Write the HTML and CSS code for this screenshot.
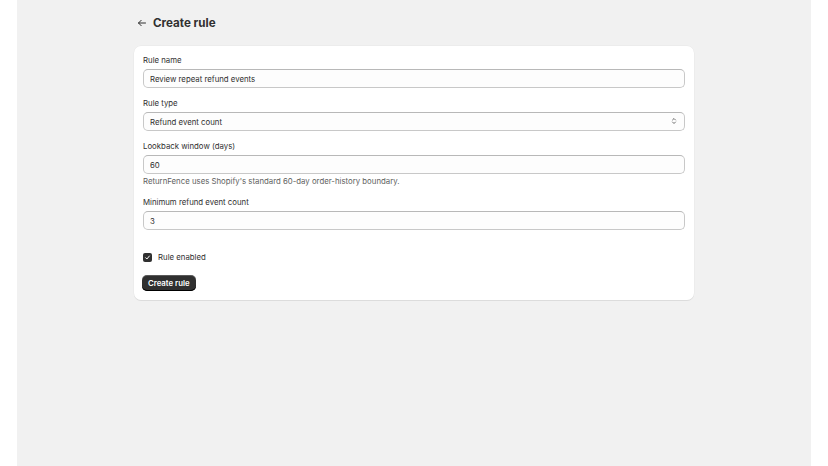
FILE: index.html
```html
<!DOCTYPE html>
<html lang="en">
<head>
    <meta charset="UTF-8">
    <meta name="viewport" content="width=device-width, initial-scale=1.0">
    <title>Create rule - ReturnFence</title>
    <link rel="stylesheet" href="styles.css">
</head>
<body>
    <div class="frame">
        <div class="page">
            <div class="page-header">
                <a href="#" class="back-link" aria-label="Back">
                    <svg width="10" height="10" viewBox="0 0 10 10" fill="none" stroke="#303030" stroke-width="1" stroke-linecap="round" stroke-linejoin="round">
                        <path d="M8.5 5H1.5M4.2 2.3L1.5 5l2.7 2.7"/>
                    </svg>
                </a>
                <h1>Create rule</h1>
            </div>

            <form class="card">
                <div class="field">
                    <label for="ruleName">Rule name</label>
                    <input type="text" id="ruleName" value="Review repeat refund events">
                </div>

                <div class="field">
                    <label for="ruleType">Rule type</label>
                    <div class="select-wrap">
                        <select id="ruleType">
                            <option>Refund event count</option>
                        </select>
                        <svg class="select-icon" width="8" height="8" viewBox="0 0 8 8" fill="none" stroke="#4a4a4a" stroke-width="0.8" stroke-linecap="round" stroke-linejoin="round">
                            <path d="M2.5 3L4 1.5 5.5 3M2.5 5L4 6.5 5.5 5"/>
                        </svg>
                    </div>
                </div>

                <div class="field">
                    <label for="lookback">Lookback window (days)</label>
                    <input type="text" id="lookback" value="60">
                    <p class="help-text">ReturnFence uses Shopify's standard 60-day order-history boundary.</p>
                </div>

                <div class="field">
                    <label for="minCount">Minimum refund event count</label>
                    <input type="text" id="minCount" value="3">
                </div>

                <label class="checkbox-row">
                    <span class="checkbox">
                        <svg width="7" height="7" viewBox="0 0 7 7" fill="none" stroke="#fff" stroke-width="1" stroke-linecap="round" stroke-linejoin="round">
                            <path d="M1.6 3.7l1.3 1.3 2.5-3"/>
                        </svg>
                    </span>
                    Rule enabled
                </label>

                <div class="actions">
                    <button type="submit" class="primary-btn">Create rule</button>
                </div>
            </form>
        </div>
    </div>
</body>
</html>
```

FILE: styles.css
```css
/* Base */
body {
    font-family: Inter, 'Noto Sans', sans-serif;
    margin: 0;
    padding: 0;
    background-color: #fff;
    color: #303030;
    font-size: 7.8px;
}

/* Gray app frame */
.frame {
    margin: 0 17px;
    min-height: 466px;
    background-color: #f1f1f1;
}

.page {
    width: 560px;
    margin: 0 auto;
    padding-top: 13px;
}

.page-header {
    display: flex;
    align-items: center;
    gap: 6px;
    height: 20px;
    margin-bottom: 13px;
    padding-left: 3px;
}
.back-link {
    display: flex;
    align-items: center;
}
.page-header h1 {
    margin: 0;
    font-size: 11.6px;
    font-weight: 700;
    color: #303030;
}

/* Card */
.card {
    background-color: #fff;
    border-radius: 7px;
    padding: 8px 9px 9px;
    box-shadow: 0 1px 0 #dcdcdc, 0 0 0 0.5px rgba(0, 0, 0, 0.04);
    display: flex;
    flex-direction: column;
}

.field {
    display: flex;
    flex-direction: column;
    margin-bottom: 9px;
}
.field label {
    line-height: 12px;
    margin-bottom: 3px;
    color: #303030;
}

input, select {
    font-family: inherit;
    font-size: 7.8px;
    color: #303030;
    height: 19px;
    box-sizing: border-box;
    border: 1px solid #c8c8c8;
    border-top-color: #b8b8b8;
    border-radius: 5px;
    background-color: #fdfdfd;
    padding: 0 6px;
    width: 100%;
    outline: none;
}

.select-wrap {
    position: relative;
}
select {
    appearance: none;
    -webkit-appearance: none;
}
.select-icon {
    position: absolute;
    right: 7px;
    top: 5px;
    pointer-events: none;
}

.help-text {
    margin: 1px 0 0;
    line-height: 12px;
    color: #616161;
}

/* Checkbox */
.checkbox-row {
    display: flex;
    align-items: center;
    gap: 6px;
    line-height: 12px;
    margin-top: 12px;
    margin-bottom: 12px;
    color: #303030;
}
.checkbox {
    width: 9px;
    height: 9px;
    border-radius: 2px;
    background-color: #303030;
    display: flex;
    align-items: center;
    justify-content: center;
}

/* Button */
.actions {
    display: flex;
}
.primary-btn {
    font-family: inherit;
    font-size: 7.8px;
    font-weight: 600;
    color: #fff;
    background-color: #303030;
    border: none;
    border-radius: 5px;
    height: 16px;
    padding: 0 6px;
    margin-left: -1px;
    cursor: pointer;
    box-shadow: inset 0 -1px 0 #000, inset 0 1px 0 rgba(255, 255, 255, 0.2);
}
```
